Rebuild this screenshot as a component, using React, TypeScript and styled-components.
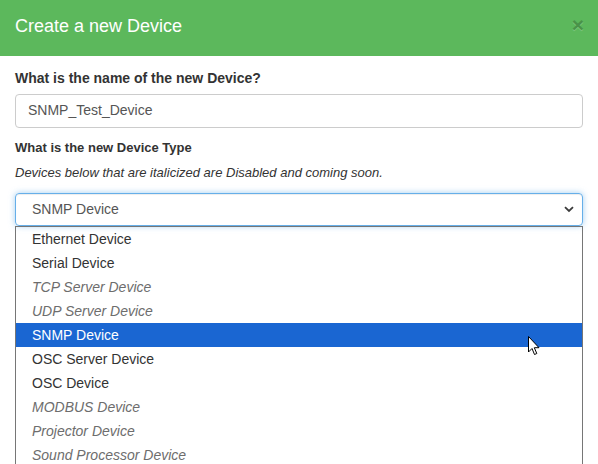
import React from "react";
import styled, { createGlobalStyle } from "styled-components";

const GlobalStyle = createGlobalStyle`
  html, body {
    margin: 0;
    padding: 0;
    background: #ffffff;
    overflow: hidden;
  }
  body {
    font-family: "Liberation Sans", Arial, sans-serif;
    font-size: 14px;
    line-height: 1.42857;
    color: #333333;
  }
  * {
    box-sizing: border-box;
  }
`;

const Modal = styled.div`
  position: relative;
  width: 598px;
  height: 464px;
  background: #ffffff;
`;

const Header = styled.div`
  display: flex;
  align-items: center;
  justify-content: space-between;
  height: 56px;
  padding: 0 15px;
  background: #5cb85c;
`;

const Title = styled.h4`
  margin: 0;
  font-size: 18px;
  font-weight: 400;
  line-height: 26px;
  color: #ffffff;
  padding-bottom: 4px;
`;

const Close = styled.span`
  font-size: 21px;
  font-weight: 700;
  line-height: 1;
  color: #000000;
  opacity: 0.2;
  text-shadow: 0 1px 0 #ffffff;
  margin-right: -1px;
  padding-bottom: 8px;
`;

const Body = styled.div`
  padding: 12px 15px 0;
  display: flex;
  flex-direction: column;
`;

const Group = styled.div<{ $gap: number }>`
  display: flex;
  flex-direction: column;
  margin-bottom: ${(p) => p.$gap}px;
`;

const Label = styled.label<{ $small?: boolean }>`
  font-weight: 700;
  font-size: ${(p) => (p.$small ? 13 : 14)}px;
  line-height: 20px;
  margin-bottom: 6px;
`;

const Help = styled.p`
  margin: -1px 0 10px;
  font-style: italic;
  font-size: 13px;
  line-height: 20px;
`;

const Input = styled.div`
  height: 34px;
  padding: 0 12px;
  border: 1px solid #cccccc;
  border-radius: 4px;
  display: flex;
  align-items: center;
  color: #555555;
  font-size: 14px;
`;

const Select = styled.div`
  height: 33px;
  padding: 0 8px 0 16px;
  border: 1px solid #66afe9;
  border-radius: 4px;
  box-shadow: inset 0 1px 1px rgba(0, 0, 0, 0.075),
    0 0 6px rgba(102, 175, 233, 0.6);
  display: flex;
  align-items: center;
  justify-content: space-between;
  color: #555555;
`;

const List = styled.ul`
  margin: 0;
  padding: 0;
  list-style: none;
  border: 1px solid #767676;
  border-bottom: none;
  height: 260px;
`;

const Option = styled.li<{ $disabled?: boolean; $selected?: boolean }>`
  height: 24px;
  line-height: 24px;
  padding-left: 16px;
  font-style: ${(p) => (p.$disabled ? "italic" : "normal")};
  color: ${(p) =>
    p.$selected ? "#ffffff" : p.$disabled ? "#6d6d6d" : "#333333"};
  background: ${(p) => (p.$selected ? "#1a66d2" : "transparent")};
`;

const Cursor = styled.svg`
  position: absolute;
  left: 528px;
  top: 336px;
`;

const options = [
  { name: "Ethernet Device" },
  { name: "Serial Device" },
  { name: "TCP Server Device", disabled: true },
  { name: "UDP Server Device", disabled: true },
  { name: "SNMP Device", selected: true },
  { name: "OSC Server Device" },
  { name: "OSC Device" },
  { name: "MODBUS Device", disabled: true },
  { name: "Projector Device", disabled: true },
  { name: "Sound Processor Device", disabled: true },
];

export default function App() {
  return (
    <>
      <GlobalStyle />
      <Modal>
        <Header>
          <Title>Create a new Device</Title>
          <Close>×</Close>
        </Header>
        <Body>
          <Group $gap={10}>
            <Label>What is the name of the new Device?</Label>
            <Input>SNMP_Test_Device</Input>
          </Group>
          <Group $gap={0}>
            <Label $small>What is the new Device Type</Label>
            <Help>Devices below that are italicized are Disabled and coming soon.</Help>
            <Select>
              <span>SNMP Device</span>
              <svg width="10" height="7" viewBox="0 0 10 7">
                <path
                  d="M1 1.2 L5 5 L9 1.2"
                  fill="none"
                  stroke="#3b3b3b"
                  strokeWidth="1.8"
                />
              </svg>
            </Select>
            <List>
              {options.map((o) => (
                <Option key={o.name} $disabled={o.disabled} $selected={o.selected}>
                  {o.name}
                </Option>
              ))}
            </List>
          </Group>
        </Body>
        <Cursor width="13" height="20" viewBox="0 0 13 20">
          <path
            d="M0.5 0.5 L0.5 16 L4 12.5 L6.5 18.5 L8.8 17.5 L6.3 11.7 L11 11.7 Z"
            fill="#ffffff"
            stroke="#000000"
            strokeWidth="1"
            strokeLinejoin="round"
          />
        </Cursor>
      </Modal>
    </>
  );
}
